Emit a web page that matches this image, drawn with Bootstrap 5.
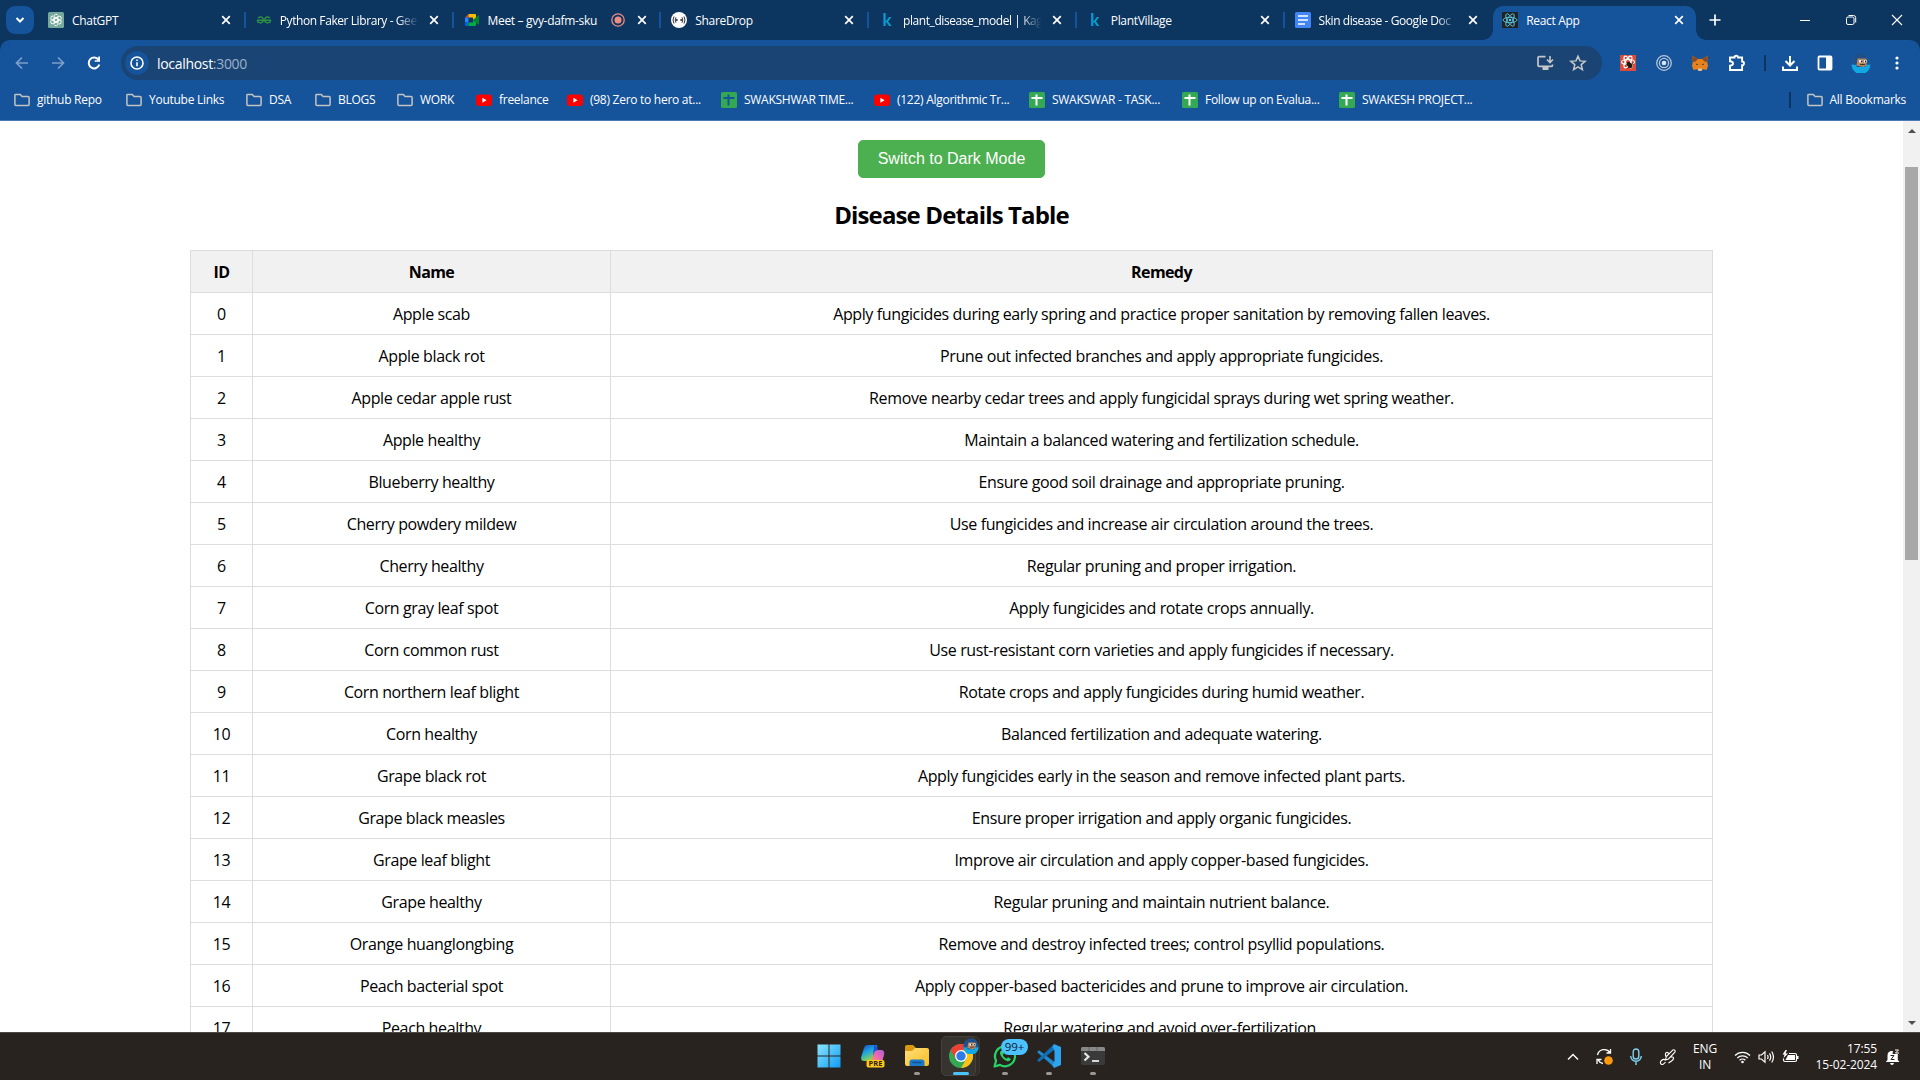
<!DOCTYPE html>
<html lang="en">
<head>
<meta charset="utf-8">
<title>React App</title>
<link href="https://cdn.jsdelivr.net/npm/bootstrap@5.3.0/dist/css/bootstrap.min.css" rel="stylesheet">
<style>
body{width:1920px;height:1080px;overflow:hidden;font-family:"Open Sans","Noto Sans",sans-serif;color:#000;background:#0c3560}
svg{display:block;flex:none}
.tabstrip{height:40px;background:#0c3560}
.tabsearch{width:28px;height:28px;border-radius:9px;background:#15539a;margin:6px 4px 6px 6px}
.btab{width:207.75px;height:40px;padding-left:10px;color:#fff;font-size:12px;letter-spacing:-.32px;position:relative}
.btab .cap{width:140px;margin-left:8px;padding-top:1px;white-space:nowrap;overflow:hidden;line-height:18px}
.btab.fade-end .cap{letter-spacing:-.42px;-webkit-mask-image:linear-gradient(90deg,#000 84%,transparent 99%);mask-image:linear-gradient(90deg,#000 84%,transparent 99%)}
.btab.rec .cap{width:123px}
.btab .x{margin-left:8px}
.btab.rec .x{margin-left:11px}
.btab.sep::after{content:"";position:absolute;right:0;top:12px;width:2px;height:16px;background:#15539a}
.btab.current{width:203px;margin-left:1px;height:34px;margin-top:6px;padding:0 0 6px 9px;background:#15539a;border-radius:10px 10px 0 0}
.btab.current .x{margin-left:7px}
.btab.current::before,.btab.current::after{content:"";position:absolute;bottom:0;width:10px;height:10px}
.btab.current::before{left:-10px;background:radial-gradient(circle at 0 0,transparent 9.5px,#15539a 10px)}
.btab.current::after{right:-10px;background:radial-gradient(circle at 100% 0,transparent 9.5px,#15539a 10px)}
.kag{width:16px;color:#0a9bd0;font:bold 17px/18px "Lato",sans-serif;text-align:center}
.newtab{margin-left:13px}
.winbtns{gap:34px;margin-right:17px}
.toolbar{height:46px;background:#15539a;border-radius:10px 10px 0 0;padding-top:0}
.navs{width:121px;gap:20px;padding-left:14px}
.omni{width:1481px;height:34px;border-radius:17px;background:#194473;color:#fff;font-size:14px;letter-spacing:-.31px;padding:0 15px 0 4px}
.info{width:24px;height:24px;background:#15539a}
.port{color:#9db0c9}
.exts{gap:20px;margin-left:18px}
.gap-star{margin-left:15px}
.puz{margin-right:-2px}
.dl{margin-left:-5px}
.nudge{margin-left:-2px}
.vsep{width:2px;height:16px;background:#0c3560}
.bookbar{height:34px;background:#15539a;color:#fff;font-size:12px;letter-spacing:-.27px;padding:0 14px 6px 14px}
.bm{white-space:nowrap;gap:7px}
.w1{width:112px}.w2{width:120px}.w3{width:69px}.w4{width:82px}.w5{width:79px}.w6{width:91px}.w7{width:154px}.w8{width:153px}.w9{width:155px}.w10{width:153px}.w11{width:157px}.w12{width:170px}
.bookline{height:1px;background:#4d7ab6}
.pagearea{height:911px;background:#fff;overflow:hidden}
.viewport{width:1903px;overflow:hidden;padding-top:19px}
.darkbtn{--bs-btn-bg:#4caf50;--bs-btn-color:#fff;--bs-btn-border-color:#4caf50;--bs-btn-border-radius:5px;width:187px;height:38px;padding:0;font:16px/36px "Liberation Sans",Arial,sans-serif}
.heading{font-size:24px;font-weight:700;line-height:36px;margin:19px 0 17px;letter-spacing:-.86px;height:36px}
.dtable{width:1523px;table-layout:fixed;border-color:#ddd;--bs-table-color:#000;font-size:16px;letter-spacing:-.38px;text-align:center;margin:0 auto;border-collapse:collapse}
.dtable th,.dtable td{height:42px;padding:1px 0 0;border:1px solid #ddd;line-height:24px;vertical-align:middle}
.dtable thead th{background:#f1f1f1;font-size:16px;letter-spacing:-.6px}
.c-id{width:62px}.c-name{width:358px}
.sbar{width:17px;background:#f1f1f1;padding:8px 0 7px}
.thumb{width:13px;height:393px;margin-top:34px;background:#a8a8a8}
.taskbar{height:48px;background:#28231f;border-top:1px solid #4b4744;color:#fff}
.side{width:807px}
.slot{width:44px;height:47px;padding-bottom:1px;position:relative}
.slot .dot{position:absolute;bottom:5px;left:19px;width:6px;height:3px;border-radius:2px;background:#9a9794}
.slot.chr .box{position:absolute;left:2px;top:3px;width:35px;height:40px;border-radius:5px;background:#37332f;border:1px solid #44403c}
.slot.chr .box2{position:absolute;left:6px;top:3px;width:35px;height:40px;border-radius:5px;background:#302c28;border:1px solid #3b3733}
.slot.chr .dot{left:14px;width:16px;background:#4cc2ff}
.slot svg{position:relative}
.slot .ava{position:absolute;left:24px;top:5px}
.cnt{position:absolute;left:18px;top:6px;width:27px;height:16px;border-radius:8px;background:#4cc2ff;color:#10202c;font-size:11.5px;line-height:16px;text-align:center}
.tray{padding-right:20px;font-size:12px;letter-spacing:-.1px}
.t1{margin-left:17px}.t2{margin-left:16px}.t3{margin-left:16px}.t4{margin-left:-8px}.t5{margin-left:7px}
.tray .lang{width:28px;text-align:center;line-height:16px;margin:0 23px 0 14px}
.clock{text-align:right;line-height:16px;width:70px;margin:0 8px 0 8px}
</style>
<script src="https://cdn.jsdelivr.net/npm/bootstrap@5.3.0/dist/js/bootstrap.bundle.min.js"></script>
</head>
<body class="d-flex flex-column">
<svg width="0" height="0" class="position-absolute">
<defs>
<symbol id="close" viewBox="0 0 12 12"><path d="M2.200 2.200l7.600 7.600M9.800 2.200L2.200 9.800" stroke="#fff" stroke-width="1.700"/></symbol>
<symbol id="folder" viewBox="0 0 16 16"><path d="M.9 12.500V3.200a.8.8 0 0 1 .8-.8h4.600l1.800 2h6a1 1 0 0 1 1 1v7.100a1 1 0 0 1-1 1H1.900a1 1 0 0 1-1-1z" fill="none" stroke="#c3c3c3" stroke-width="1.500"/></symbol>
<symbol id="yt" viewBox="0 0 16 16"><rect y="2.500" width="16" height="11.500" rx="3" fill="#f00"/><path d="M6.400 5.800v4.900l4.200-2.450z" fill="#fff"/></symbol>
<symbol id="sheet" viewBox="0 0 16 16"><rect width="16" height="16" rx="1.500" fill="#34a853"/><path d="M7.500 2.500v11M2.500 6h11" stroke="#fff" stroke-width="2"/></symbol>
<symbol id="sheetb" viewBox="0 0 16 16"><rect width="16" height="16" rx="1.500" fill="#34a853"/><path d="M7.500 2.500v11M2.500 6h11" stroke="#15539a" stroke-width="2"/></symbol>
<symbol id="pal" viewBox="0 0 20 20"><circle cx="10" cy="10" r="9.500" fill="#1a5796"/><path d="M3 6Q6-1 13 2l3 3-1 6H4z" fill="#204e87"/><path d="M.5 11.500l5 .5v2h9v-2l5-.5a9.500 9.500 0 0 1-19 0z" fill="#11a8e4"/><path d="M6.500 5.500h9v7l-3 1.500-7-1.500z" fill="#b8865c"/><rect x="8" y="7" width="3.500" height="2.500" fill="#eee"/><rect x="13" y="7" width="3" height="2.500" fill="#eee"/><rect x="10" y="7.500" width="1.300" height="1.700" fill="#222"/><rect x="14" y="7.500" width="1.300" height="1.700" fill="#222"/><path d="M9 11.500h5" stroke="#433" stroke-width="1"/></symbol>
</defs></svg>

<div class="tabstrip d-flex">
  <div class="tabsearch d-flex align-items-center justify-content-center"><svg width="10" height="8" viewBox="0 0 10 8"><path d="M1.500 2L5 5.500 8.500 2" fill="none" stroke="#fff" stroke-width="2"/></svg></div>
  <div class="btab sep d-flex align-items-center">
    <svg width="16" height="16" viewBox="0 0 16 16"><rect width="16" height="16" rx="1.500" fill="#74aa9c"/><g fill="none" stroke="#fff" stroke-width=".9"><g id="petal"><path d="M6 4.500V9l4 2.300M6 4.500a2.100 2.100 0 0 1 4-1"/></g><use href="#petal" transform="rotate(60 8 8)"/><use href="#petal" transform="rotate(120 8 8)"/><use href="#petal" transform="rotate(180 8 8)"/><use href="#petal" transform="rotate(240 8 8)"/><use href="#petal" transform="rotate(300 8 8)"/></g></svg>
    <span class="cap">ChatGPT</span><svg class="x" width="12" height="12"><use href="#close"/></svg></div>
  <div class="btab sep fade-end d-flex align-items-center">
    <svg width="16" height="16" viewBox="0 0 16 16"><g fill="none" stroke="#2f8d46" stroke-width="1.500"><path d="M2 5.800q3.500-2 5 .7.900 4-2.300 4.300Q1.500 11 1.500 8.300H14.500q0 2.700-3.200 2.500Q8.100 10.500 9 6.500q1.500-2.700 5-.7"/></g></svg>
    <span class="cap">Python Faker Library - Gee</span><svg class="x" width="12" height="12"><use href="#close"/></svg></div>
  <div class="btab sep rec d-flex align-items-center">
    <svg width="16" height="16" viewBox="0 0 16 16"><path d="M1 5.500L4.500 2v3.500z" fill="#ea4335"/><path d="M4.500 2H11a1 1 0 0 1 1 1v3L9 8V5.500H4.500z" fill="#fbbc04"/><path d="M1 5.500h3.500v5H1z" fill="#2684fc"/><path d="M1 10.500h3.500V14H2a1 1 0 0 1-1-1z" fill="#0066da"/><path d="M4.500 10.500H9V8l3 2.200V13a1 1 0 0 1-1 1H4.500z" fill="#00ac47"/><path d="M9 8l5-4.500q1-.5 1 .5v8q0 1-1 .5z" fill="#00832d"/></svg>
    <span class="cap">Meet – gvy-dafm-sku</span>
    <svg width="14" height="14" viewBox="0 0 14 14"><circle cx="7" cy="7" r="6.200" fill="none" stroke="#f08b82" stroke-width="1.300"/><circle cx="7" cy="7" r="3.500" fill="#f08b82"/></svg>
    <svg class="x" width="12" height="12"><use href="#close"/></svg></div>
  <div class="btab sep d-flex align-items-center">
    <svg width="16" height="16" viewBox="0 0 16 16"><circle cx="8" cy="8" r="8" fill="#fff"/><g fill="none" stroke="#333" stroke-width="1"><path d="M3 4.500q-2 3.500 0 7M5 5.300q-1.600 2.700 0 5.400M13 4.500q2 3.500 0 7M11 5.300q1.600 2.700 0 5.400"/></g><circle cx="5.800" cy="8" r="1" fill="#333"/><circle cx="10.200" cy="8" r="1" fill="#333"/></svg>
    <span class="cap">ShareDrop</span><svg class="x" width="12" height="12"><use href="#close"/></svg></div>
  <div class="btab sep fade-end d-flex align-items-center"><span class="kag">k</span><span class="cap">plant_disease_model | Kag</span><svg class="x" width="12" height="12"><use href="#close"/></svg></div>
  <div class="btab sep d-flex align-items-center"><span class="kag">k</span><span class="cap">PlantVillage</span><svg class="x" width="12" height="12"><use href="#close"/></svg></div>
  <div class="btab fade-end d-flex align-items-center">
    <svg width="16" height="16" viewBox="0 0 16 16"><rect width="16" height="16" rx="1.500" fill="#4285f4"/><path d="M3 4h10M3 8h10M3 12h7" stroke="#fff" stroke-width="1.700"/></svg>
    <span class="cap">Skin disease - Google Doc</span><svg class="x" width="12" height="12"><use href="#close"/></svg></div>
  <div class="btab current d-flex align-items-center">
    <svg width="16" height="16" viewBox="0 0 16 16"><rect width="16" height="16" rx="1" fill="#222"/><g fill="none" stroke="#61dafb" stroke-width=".8"><ellipse cx="8" cy="8" rx="7" ry="2.700"/><ellipse cx="8" cy="8" rx="7" ry="2.700" transform="rotate(60 8 8)"/><ellipse cx="8" cy="8" rx="7" ry="2.700" transform="rotate(120 8 8)"/></g><circle cx="8" cy="8" r="1.200" fill="#61dafb"/></svg>
    <span class="cap">React App</span><svg class="x" width="12" height="12"><use href="#close"/></svg></div>
  <div class="d-flex align-items-center flex-grow-1">
    <svg class="newtab" width="12" height="12" viewBox="0 0 12 12"><path d="M6 .5v11M.5 6h11" stroke="#fff" stroke-width="1.700"/></svg>
    <div class="winbtns d-flex align-items-center ms-auto">
      <svg width="12" height="12" viewBox="0 0 12 12"><path d="M1 6.500h10" stroke="#fff"/></svg>
      <svg width="12" height="12" viewBox="0 0 12 12"><path d="M1.500 4.500a1.500 1.500 0 0 1 1.500-1.500h4.500A1.500 1.500 0 0 1 9 4.500V9a1.500 1.500 0 0 1-1.500 1.500H3A1.500 1.500 0 0 1 1.500 9zM3.500 1.500H8.500a2.200 2.200 0 0 1 2.200 2.200V8.500" fill="none" stroke="#fff"/></svg>
      <svg width="12" height="12" viewBox="0 0 12 12"><path d="M1 1l10 10M11 1L1 11" stroke="#fff" stroke-width="1.100"/></svg>
    </div>
  </div>
</div>

<div class="toolbar d-flex align-items-center">
  <div class="navs d-flex">
    <svg width="16" height="16" viewBox="0 0 16 16"><path d="M14 8H2.800M8 2.500L2.500 8 8 13.500" fill="none" stroke="#7f9fca" stroke-width="1.700"/></svg>
    <svg width="16" height="16" viewBox="0 0 16 16"><path d="M2 8h11.200M8 2.500L13.500 8 8 13.500" fill="none" stroke="#7f9fca" stroke-width="1.700"/></svg>
    <svg width="16" height="16" viewBox="0 0 16 16"><path d="M13.300 9.500A5.400 5.400 0 1 1 12.500 4.800" fill="none" stroke="#fff" stroke-width="2"/><path d="M14 1.500v5.300H8.700V5.200h3.500V1.500z" fill="#fff"/></svg>
  </div>
  <div class="omni d-flex align-items-center">
    <span class="info rounded-circle d-flex align-items-center justify-content-center"><svg width="14" height="14" viewBox="0 0 14 14"><circle cx="7" cy="7" r="6" fill="none" stroke="#fff" stroke-width="1.600"/><path d="M7 6.200v4M7 3.400v1.600" stroke="#fff" stroke-width="1.600"/></svg></span>
    <span class="ms-2">localhost<span class="port">:3000</span></span>
    <svg class="ms-auto" width="17" height="16" viewBox="0 0 17 16"><path d="M8.500 1.700H2a1 1 0 0 0-1 1v7.600a1 1 0 0 0 1 1h12.500a1 1 0 0 0 1-1V9.500" fill="none" stroke="#c7c7c7" stroke-width="1.700"/><path d="M5.500 12h6v3h-6z" fill="#c7c7c7"/><path d="M13 1v6M10 4.500l3 3 3-3" fill="none" stroke="#c7c7c7" stroke-width="1.600"/></svg>
    <svg class="gap-star" width="18" height="18" viewBox="0 0 18 18"><path d="M9 2.200l2 4.700 5.100.4-3.900 3.300 1.200 5L9 12.900l-4.400 2.700 1.200-5L1.900 7.300 7 6.900z" fill="none" stroke="#c7c7c7" stroke-width="1.500"/></svg>
  </div>
  <div class="exts d-flex align-items-center">
    <svg width="16" height="16" viewBox="0 0 16 16"><rect width="16" height="16" fill="#dd4b39"/><g fill="none" stroke="#fff" stroke-width="1.200"><ellipse cx="8" cy="7" rx="6.500" ry="2.500"/><ellipse cx="8" cy="7" rx="6.500" ry="2.500" transform="rotate(60 8 7)"/><ellipse cx="8" cy="7" rx="6.500" ry="2.500" transform="rotate(120 8 7)"/></g><ellipse cx="9.500" cy="10" rx="2.200" ry="3.500" transform="rotate(-35 9.500 10)" fill="#21150f"/><path d="M5.500 10l8-1M7.500 13.500l5.500-6" stroke="#21150f" stroke-width=".8"/></svg>
    <svg width="16" height="16" viewBox="0 0 16 16"><g fill="none" stroke="#b9c4d6" stroke-width="1.300"><circle cx="8" cy="8" r="7.300"/><circle cx="8" cy="8" r="4.600"/></g><circle cx="8" cy="8" r="2.300" fill="#dde4ef"/></svg>
    <svg width="16" height="16" viewBox="0 0 16 16"><path d="M0 .5L6 4h4l6-3.500-.8 6.500L16 11l-1.500 4-3.500-.8L9.500 16h-3L5 14.200l-3.500.8L0 11l.8-4z" fill="#e8821e"/><path d="M0 .5L6 4 3.500 6.500.8 7zM16 .5L10 4l2.500 2.500 2.700.5z" fill="#8a4a20"/><path d="M6 13.500h4L9.500 16h-3z" fill="#d5c3b2"/><path d="M4 8.500l2.500 1.300L4.500 10zM12 8.500L9.500 9.800l2 .2z" fill="#233447"/></svg>
    <svg class="puz" width="18" height="18" viewBox="0 0 18 18"><path d="M2 3.500h4.500a1.800 1.800 0 0 1 3.600 0h4v4a1.800 1.800 0 0 1 0 3.800v4.700H2v-4.300q3-.2 3-2.200T2 7.300z" fill="none" stroke="#fff" stroke-width="1.900"/></svg>
    <span class="vsep"></span>
    <svg class="dl" width="18" height="18" viewBox="0 0 18 18"><path d="M9 2v9M4.500 7L9 11.500 13.500 7M2 12.500V16h14v-3.500" fill="none" stroke="#fff" stroke-width="2"/></svg>
    <svg class="nudge" width="16" height="16" viewBox="0 0 16 16"><rect x="1.500" y="1.500" width="13" height="13" rx="1" fill="none" stroke="#fff" stroke-width="1.800"/><path d="M9 1.500h5.500v13H9z" fill="#fff"/></svg>
    <svg class="nudge" width="20" height="20"><use href="#pal"/></svg>
    <svg class="nudge" width="16" height="16" viewBox="0 0 16 16"><g fill="#fff"><circle cx="8" cy="3" r="1.600"/><circle cx="8" cy="8" r="1.600"/><circle cx="8" cy="13" r="1.600"/></g></svg>
  </div>
</div>

<div class="bookbar d-flex align-items-center">
  <div class="bm w1 d-flex align-items-center"><svg width="16" height="16"><use href="#folder"/></svg>github Repo</div>
  <div class="bm w2 d-flex align-items-center"><svg width="16" height="16"><use href="#folder"/></svg>Youtube Links</div>
  <div class="bm w3 d-flex align-items-center"><svg width="16" height="16"><use href="#folder"/></svg>DSA</div>
  <div class="bm w4 d-flex align-items-center"><svg width="16" height="16"><use href="#folder"/></svg>BLOGS</div>
  <div class="bm w5 d-flex align-items-center"><svg width="16" height="16"><use href="#folder"/></svg>WORK</div>
  <div class="bm w6 d-flex align-items-center"><svg width="16" height="16"><use href="#yt"/></svg>freelance</div>
  <div class="bm w7 d-flex align-items-center"><svg width="16" height="16"><use href="#yt"/></svg>(98) Zero to hero at...</div>
  <div class="bm w8 d-flex align-items-center"><svg width="16" height="16"><use href="#sheetb"/></svg>SWAKSHWAR TIME...</div>
  <div class="bm w9 d-flex align-items-center"><svg width="16" height="16"><use href="#yt"/></svg>(122) Algorithmic Tr...</div>
  <div class="bm w10 d-flex align-items-center"><svg width="16" height="16"><use href="#sheet"/></svg>SWAKSWAR - TASK...</div>
  <div class="bm w11 d-flex align-items-center"><svg width="16" height="16"><use href="#sheet"/></svg>Follow up on Evalua...</div>
  <div class="bm w12 d-flex align-items-center"><svg width="16" height="16"><use href="#sheet"/></svg>SWAKESH PROJECT...</div>
  <span class="vsep ms-auto me-3"></span>
  <div class="bm d-flex align-items-center"><svg width="16" height="16"><use href="#folder"/></svg>All Bookmarks</div>
</div>
<div class="bookline"></div>

<div class="pagearea d-flex">
  <main class="viewport">
    <div class="text-center"><button class="btn darkbtn" type="button">Switch to Dark Mode</button></div>
    <h2 class="heading text-center">Disease Details Table</h2>
    <table class="table table-bordered dtable">
      <colgroup><col class="c-id"><col class="c-name"><col></colgroup>
      <thead><tr><th>ID</th><th>Name</th><th>Remedy</th></tr></thead>
      <tbody>
        <tr><td>0</td><td>Apple scab</td><td>Apply fungicides during early spring and practice proper sanitation by removing fallen leaves.</td></tr>
        <tr><td>1</td><td>Apple black rot</td><td>Prune out infected branches and apply appropriate fungicides.</td></tr>
        <tr><td>2</td><td>Apple cedar apple rust</td><td>Remove nearby cedar trees and apply fungicidal sprays during wet spring weather.</td></tr>
        <tr><td>3</td><td>Apple healthy</td><td>Maintain a balanced watering and fertilization schedule.</td></tr>
        <tr><td>4</td><td>Blueberry healthy</td><td>Ensure good soil drainage and appropriate pruning.</td></tr>
        <tr><td>5</td><td>Cherry powdery mildew</td><td>Use fungicides and increase air circulation around the trees.</td></tr>
        <tr><td>6</td><td>Cherry healthy</td><td>Regular pruning and proper irrigation.</td></tr>
        <tr><td>7</td><td>Corn gray leaf spot</td><td>Apply fungicides and rotate crops annually.</td></tr>
        <tr><td>8</td><td>Corn common rust</td><td>Use rust-resistant corn varieties and apply fungicides if necessary.</td></tr>
        <tr><td>9</td><td>Corn northern leaf blight</td><td>Rotate crops and apply fungicides during humid weather.</td></tr>
        <tr><td>10</td><td>Corn healthy</td><td>Balanced fertilization and adequate watering.</td></tr>
        <tr><td>11</td><td>Grape black rot</td><td>Apply fungicides early in the season and remove infected plant parts.</td></tr>
        <tr><td>12</td><td>Grape black measles</td><td>Ensure proper irrigation and apply organic fungicides.</td></tr>
        <tr><td>13</td><td>Grape leaf blight</td><td>Improve air circulation and apply copper-based fungicides.</td></tr>
        <tr><td>14</td><td>Grape healthy</td><td>Regular pruning and maintain nutrient balance.</td></tr>
        <tr><td>15</td><td>Orange huanglongbing</td><td>Remove and destroy infected trees; control psyllid populations.</td></tr>
        <tr><td>16</td><td>Peach bacterial spot</td><td>Apply copper-based bactericides and prune to improve air circulation.</td></tr>
        <tr><td>17</td><td>Peach healthy</td><td>Regular watering and avoid over-fertilization.</td></tr>
      </tbody>
    </table>
  </main>
  <div class="sbar d-flex flex-column align-items-center">
    <svg width="8" height="4" viewBox="0 0 8 4"><path d="M0 4l4-4 4 4z" fill="#505050"/></svg>
    <div class="thumb"></div>
    <svg class="mt-auto" width="8" height="4" viewBox="0 0 8 4"><path d="M0 0l4 4 4-4z" fill="#505050"/></svg>
  </div>
</div>

<footer class="taskbar d-flex align-items-center">
  <div class="side"></div>
  <div class="slot d-flex align-items-center justify-content-center"><svg width="24" height="24" viewBox="0 0 24 24"><defs><linearGradient id="wg" x2="1" y2="1"><stop stop-color="#8be4ff"/><stop offset="1" stop-color="#0f9cf0"/></linearGradient></defs><path d="M.5.500h11v11H.5zM12.500.500h11v11h-11zM.5 12.500h11v11H.5zM12.500 12.500h11v11h-11z" fill="url(#wg)"/></svg></div>
  <div class="slot d-flex align-items-center justify-content-center"><svg width="24" height="24" viewBox="0 0 24 24"><defs><linearGradient id="c1" x2=".5" y2="1"><stop stop-color="#1b48c8"/><stop offset=".5" stop-color="#1ea7e0"/><stop offset="1" stop-color="#9ad63c"/></linearGradient><linearGradient id="c2" x1="1" x2=".3" y2="1"><stop stop-color="#8d5cf0"/><stop offset=".6" stop-color="#ef67b0"/><stop offset="1" stop-color="#fd9a56"/></linearGradient></defs><path d="M6 1h9q2 0 1 3l-3.500 10q-1 3-4 3H3q-4 0-2.500-5L3 4q1-3 3-3z" fill="url(#c1)"/><path d="M13 1q3 0 4 5h4q3 1 2 5l-2 7q-1 3-4 3H9l4-12q1-3 4-3-1-5-4-5z" fill="url(#c2)"/><path d="M13 1q3 0 4 5-3 0-4 3l-1 3z" fill="#1b52d6"/><rect x="5.500" y="16" width="18" height="7.500" rx="2" fill="#ffc91c"/><text x="14.500" y="22.400" font-size="7.500" font-weight="700" text-anchor="middle" fill="#2b2100" font-family="Open Sans">PRE</text></svg></div>
  <div class="slot d-flex align-items-center justify-content-center"><svg width="24" height="24" viewBox="0 0 24 24"><defs><linearGradient id="fg" x2="1" y2="1"><stop stop-color="#ffe07a"/><stop offset="1" stop-color="#f9bd23"/></linearGradient></defs><path d="M0 3q0-2 2-2h6l3 3-3 4H0z" fill="#d99a10"/><path d="M0 7h7l3-3h12q2 0 2 2v14q0 2-2 2H2q-2 0-2-2z" fill="url(#fg)"/><path d="M4.500 22v-4q0-2.500 2.500-2.500h10q2.500 0 2.500 2.500v4z" fill="#1d78c8"/><path d="M7.500 18.500h9" stroke="#0b5394" stroke-width="1.500"/></svg><span class="dot"></span></div>
  <div class="slot chr d-flex align-items-center justify-content-center"><span class="box2"></span><span class="box"></span><svg width="24" height="24" viewBox="0 0 24 24"><circle cx="12" cy="12" r="12" fill="#34a853"/><path d="M1.600 6A12 12 0 0 1 22.400 6H12l-5.200 9z" fill="#ea4335"/><path d="M22.400 6A12 12 0 0 1 12 24l5.200-9L12 6z" fill="#fbc116"/><circle cx="12" cy="12" r="6" fill="#fff"/><circle cx="12" cy="12" r="4.700" fill="#2f7bea"/></svg><svg class="ava" width="16" height="16" viewBox="0 0 20 20"><use href="#pal" width="20" height="20"/></svg><span class="dot"></span></div>
  <div class="slot d-flex align-items-center justify-content-center"><svg width="24" height="24" viewBox="0 0 24 24"><path d="M1.500 22.500l1.600-5.700A10 10 0 1 1 7 20.900z" fill="none" stroke="#25d366" stroke-width="2.200" stroke-linejoin="round"/><path d="M8.500 6.500q-2.500 1.500-1 4.500 2.500 5 7 6.200 2.500.3 3.500-2.200l-3-1.700-1.500 1.500q-2.700-1.200-3.800-3.700l1.200-1.500-1-3z" fill="#25d366"/></svg><span class="cnt">99+</span><span class="dot"></span></div>
  <div class="slot d-flex align-items-center justify-content-center"><svg width="24" height="24" viewBox="0 0 24 24"><path d="M0 8l2-1.800L17.500 18v5.500z" fill="#1f8ad2"/><path d="M0 16.200L17 .3V6L2 18z" fill="#0f6fb5"/><path d="M17 0l7 3v18l-7 3-1.500-2.500L17.500 17V7l-2-4.500z" fill="#2fa4ee"/></svg><span class="dot"></span></div>
  <div class="slot d-flex align-items-center justify-content-center"><svg width="24" height="20" viewBox="0 0 24 20"><rect y="1" width="24" height="18" rx="1.500" fill="#3a3a3a"/><path d="M0 2.500Q0 1 1.500 1h21Q24 1 24 2.500V5H0z" fill="#888"/><path d="M8 1v4M16 1v4" stroke="#666"/><path d="M3.500 7l4 3.700-4 3.800" fill="none" stroke="#e5e5e5" stroke-width="2.200"/><path d="M11 15h7" stroke="#fff" stroke-width="1.600"/></svg><span class="dot"></span></div>
  <div class="tray d-flex align-items-center ms-auto">
    <svg width="12" height="8" viewBox="0 0 12 8"><path d="M1 6.500l5-5 5 5" fill="none" stroke="#fff" stroke-width="1.400"/></svg>
    <svg class="t1" width="17" height="18" viewBox="0 0 17 18"><path d="M1.500 7A7 7 0 0 1 14 4.500M14.500 1v4h-4M7 15.500A7 7 0 0 1 2 11.500M1 16v-4.500h4.500" fill="none" stroke="#fff" stroke-width="1.300"/><circle cx="12.500" cy="12.500" r="4.300" fill="#ff9a0c"/></svg>
    <svg class="t2" width="14" height="18" viewBox="0 0 14 18"><rect x="4.200" y="1" width="5.600" height="10" rx="2.800" fill="none" stroke="#7fd3f0" stroke-width="1.400"/><path d="M1.700 8a5.300 5.300 0 0 0 10.600 0M7 13.500V17" fill="none" stroke="#7fd3f0" stroke-width="1.400"/></svg>
    <svg class="t3" width="18" height="18" viewBox="0 0 18 18"><path d="M6.500 12l.8-3.500 6.200-6.200q1.300-1 2.200-.1t0 2.200L9.500 11zM7 8.500q-1.500-3 .5-4T9.500 7M6.500 12q-2-1.500-4 .5T2 16q2 1.500 4.500-2M11.500 9q3.500-.5 3 1.500T9.500 15" fill="none" stroke="#fff" stroke-width="1.100"/></svg>
    <div class="lang">ENG<br>IN</div>
    <svg class="t4" width="17" height="14" viewBox="0 0 17 14"><g fill="none" stroke="#fff" stroke-width="1.300"><path d="M1 5.500a10.500 10.500 0 0 1 15 0M3.300 8a7.300 7.300 0 0 1 10.400 0M5.600 10.300a4.200 4.200 0 0 1 5.800 0"/></g><circle cx="8.500" cy="12" r="1.300" fill="#fff"/></svg>
    <svg class="t5" width="17" height="14" viewBox="0 0 17 14"><path d="M1 5h2.500L7 1.800v10.400L3.500 9H1zM9.500 5q1.200 2 0 4M11.500 3.300q2.500 3.700 0 7.400M13.700 1.500q3.600 5.500 0 11" fill="none" stroke="#fff" stroke-width="1.200"/></svg>
    <svg class="t5" width="17" height="14" viewBox="0 0 17 14"><path d="M7 3.500h6q1.500 0 1.500 1.500v5q0 1.500-1.500 1.500H3Q1.500 11.500 1.500 10V8.500" fill="none" stroke="#fff" stroke-width="1.200"/><path d="M6 5h7v5H3.500zM15 6h1.500v3H15zM3.500 0L.5 4.500h2L1.500 8 6 3.500H3.500L5 0z" fill="#fff"/></svg>
    <div class="clock">17:55<br>15-02-2024</div>
    <svg width="15" height="16" viewBox="0 0 15 16"><path d="M2.500 11V6.500Q2.500 2 7 2h1l-.5 3h5.300v6l1.700 2H.8z" fill="#fff"/><path d="M5 14h4q-.5 2-2 2t-2-2z" fill="#fff"/><path d="M5.500 6.500h3.500L6 10.500H9.500" fill="none" stroke="#28231f" stroke-width="1"/><path d="M10 1h3.500L10.500 4h3.500" fill="none" stroke="#fff" stroke-width="1"/></svg>
  </div>
</footer>
</body>
</html>
